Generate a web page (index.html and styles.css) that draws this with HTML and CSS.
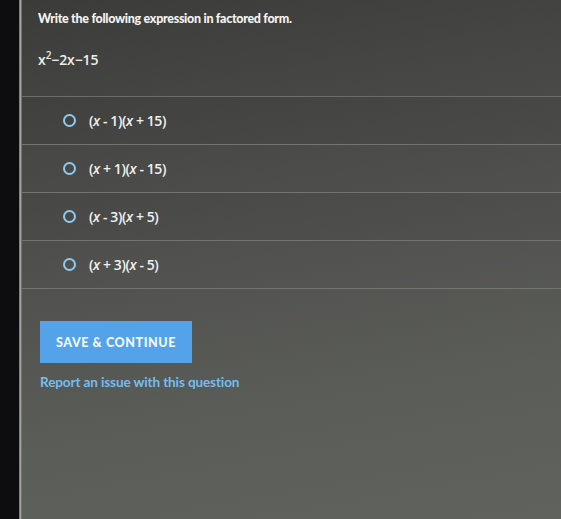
FILE: index.html
```html
<!DOCTYPE html>
<html>
<head>
<meta charset="utf-8">
<link rel="stylesheet" href="styles.css">
</head>
<body>
<div class="bezel"></div>
<div class="edge"></div>
<main class="content">
  <div class="question">
    <p class="prompt">Write the following expression in factored form.</p>
    <p class="expr"><i>x</i><sup>2</sup>−2<i>x</i>−15</p>
  </div>
  <ul class="options">
    <li class="option"><span class="radio"></span><span class="ans">(<i>x</i> - 1)(<i>x</i> + 15)</span></li>
    <li class="option"><span class="radio"></span><span class="ans">(<i>x</i> + 1)(<i>x</i> - 15)</span></li>
    <li class="option"><span class="radio"></span><span class="ans">(<i>x</i> - 3)(<i>x</i> + 5)</span></li>
    <li class="option"><span class="radio"></span><span class="ans">(<i>x</i> + 3)(<i>x</i> - 5)</span></li>
  </ul>
  <div class="actions">
    <button class="save">SAVE &amp; CONTINUE</button>
    <a class="report" href="#">Report an issue with this question</a>
  </div>
</main>
</body>
</html>
```
FILE: styles.css
```css
html, body {
  margin: 0;
  height: 100%;
}
body {
  display: flex;
  background: #0b0b0c;
  font-family: "Lato", "Open Sans", sans-serif;
  overflow: hidden;
}
.bezel {
  width: 19px;
  background: #0d0d0f;
  flex: none;
}
.edge {
  width: 3px;
  background: linear-gradient(to right, #6f706d, #a3a4a0, #5a5b58);
  flex: none;
}
.content {
  flex: 1;
  display: flex;
  flex-direction: column;
  background: linear-gradient(170deg, #3b3b39 0%, #454543 20%, #525350 50%, #5b5d58 75%, #60625d 100%);
}
.question {
  padding: 11px 16px 0;
  height: 96px;
  box-sizing: border-box;
}
.prompt {
  margin: 0;
  font-size: 12.5px;
  font-weight: 900;
  color: #f3f3f1;
  letter-spacing: -0.3px;
}
.expr {
  margin: 24px 0 0;
  font-family: "Open Sans", sans-serif;
  font-size: 14px;
  font-weight: 600;
  color: #eeeeec;
  letter-spacing: -0.1px;
}
.expr i { font-style: normal; }
.expr sup {
  font-size: 10px;
  vertical-align: 6px;
  line-height: 0;
}
.options {
  list-style: none;
  margin: 0;
  padding: 0;
  border-top: 1px solid #6c6d69;
}
.option {
  height: 47px;
  display: flex;
  align-items: center;
  gap: 13px;
  padding-left: 41px;
  border-bottom: 1px solid #73746f;
}
.option:nth-child(odd) { background: rgba(0,0,0,0.03); }
.radio {
  width: 9px;
  height: 9px;
  border: 2px solid #8fcaf0;
  border-radius: 50%;
  flex: none;
}
.ans {
  font-family: "Open Sans", sans-serif;
  font-size: 14px;
  font-weight: 600;
  color: #f0f0ee;
  letter-spacing: -0.4px;
}
.ans i { font-style: italic; }
.actions {
  padding: 32px 0 0 18px;
  display: flex;
  flex-direction: column;
  align-items: flex-start;
}
.save {
  width: 152px;
  height: 42px;
  border: none;
  background: #54a3ea;
  color: #f4f8fc;
  font-family: "Lato", sans-serif;
  font-weight: 900;
  font-size: 12.5px;
  letter-spacing: 0.6px;
  padding: 0;
}
.report {
  margin-top: 11px;
  color: #74bdf2;
  font-size: 13.5px;
  font-weight: 700;
  text-decoration: none;
  letter-spacing: -0.1px;
}
```
